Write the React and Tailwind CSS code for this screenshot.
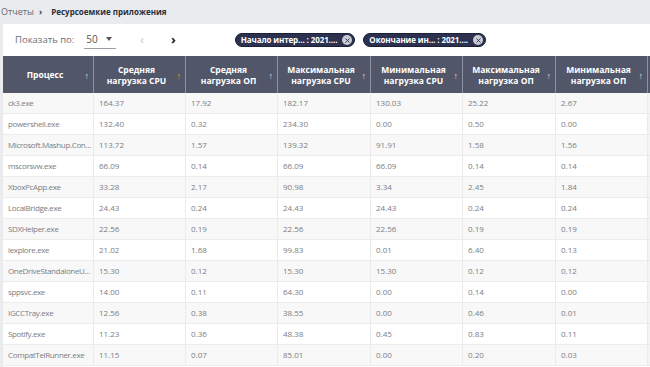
import { X } from 'lucide-react';

const columns = [
  { title: ['Процесс'], sorted: false },
  { title: ['Средняя', 'нагрузка CPU'], sorted: true },
  { title: ['Средняя', 'нагрузка ОП'], sorted: false },
  { title: ['Максимальная', 'нагрузка CPU'], sorted: false },
  { title: ['Минимальная', 'нагрузка CPU'], sorted: false },
  { title: ['Максимальная', 'нагрузка ОП'], sorted: false },
  { title: ['Минимальная', 'нагрузка ОП'], sorted: false },
];

const rows = [
  ['ck3.exe', '164.37', '17.92', '182.17', '130.03', '25.22', '2.67'],
  ['powershell.exe', '132.40', '0.32', '234.30', '0.00', '0.50', '0.00'],
  ['Microsoft.Mashup.Con...', '113.72', '1.57', '139.32', '91.91', '1.58', '1.56'],
  ['mscorsvw.exe', '66.09', '0.14', '66.09', '66.09', '0.14', '0.14'],
  ['XboxPcApp.exe', '33.28', '2.17', '90.98', '3.34', '2.45', '1.84'],
  ['LocalBridge.exe', '24.43', '0.24', '24.43', '24.43', '0.24', '0.24'],
  ['SDXHelper.exe', '22.56', '0.19', '22.56', '22.56', '0.19', '0.19'],
  ['iexplore.exe', '21.02', '1.68', '99.83', '0.01', '6.40', '0.13'],
  ['OneDriveStandaloneU...', '15.30', '0.12', '15.30', '15.30', '0.12', '0.12'],
  ['sppsvc.exe', '14.00', '0.11', '64.30', '0.00', '0.14', '0.00'],
  ['IGCCTray.exe', '12.56', '0.38', '38.55', '0.00', '0.46', '0.01'],
  ['Spotify.exe', '11.23', '0.36', '48.38', '0.45', '0.83', '0.11'],
  ['CompatTelRunner.exe', '11.15', '0.07', '85.01', '0.00', '0.20', '0.03'],
];

const gridCols = 'grid grid-cols-[91px_92px_92px_93px_92px_93px_92px_60px]';

const Chip = ({ label }) => (
  <div className="flex items-center h-[14px] rounded-full bg-[#2c3150] border border-[#1c2036] pl-[5px] pr-[2px] gap-[5px]">
    <span className="text-white font-bold text-[8px] tracking-[-0.1px] leading-none whitespace-nowrap">{label}</span>
    <span className="w-[10px] h-[10px] rounded-full bg-[#c9cbd3] flex items-center justify-center">
      <X className="w-[7px] h-[7px] text-[#2c3150]" strokeWidth={3} />
    </span>
  </div>
);

const App = () => {
  return (
    <div className="w-[650px] h-[367px] overflow-hidden bg-[#e9ebee] font-['Open_Sans','Noto_Sans',sans-serif]">
      <div className="h-[24px] flex items-center pl-[1px]">
        <span className="text-[#666a73] text-[9px]">Отчеты</span>
        <span className="text-[#444] font-bold text-[9px] ml-[5px] mr-[9px]">›</span>
        <span className="text-[#2b2f3a] font-bold text-[8px]">Ресурсоемкие приложения</span>
      </div>

      <div className="ml-[3px] bg-white h-[343px]">
        <div className="h-[32px] flex items-center pl-[12px]">
          <span className="text-[#6b6f78] text-[9.5px]">Показать по:</span>
          <div className="ml-[10px] w-[32px] h-[17px] border-b border-[#9a9ea6] flex items-center justify-between pl-[2px] pr-[4px]">
            <span className="text-[#555] text-[10px]">50</span>
            <span className="w-0 h-0 border-l-[3px] border-r-[3px] border-t-[4px] border-l-transparent border-r-transparent border-t-[#555] mb-[2px]" />
          </div>
          <span className="ml-[24px] text-[#c4c6cb] text-[12px]">‹</span>
          <span className="ml-[27px] text-[#222] text-[13px] font-bold">›</span>
          <div className="ml-[59px] flex gap-[8px]">
            <Chip label="Начало интер... : 2021...." />
            <Chip label="Окончание ин... : 2021...." />
          </div>
        </div>

        <div className={`${gridCols} h-[37px] bg-[#525669]`}>
          {columns.map((c, i) => (
            <div key={i} className="relative flex items-center justify-center border-r border-[#8d91a1] pr-[6px]">
              <div className="text-white font-bold text-[8.5px] leading-[11px] text-center">
                {c.title.map((t) => (
                  <div key={t}>{t}</div>
                ))}
              </div>
              <span className={`absolute right-[4px] top-[13px] text-[9px] font-bold ${c.sorted ? 'text-[#e0a23c]' : 'text-[#d9dbe2]'}`}>↑</span>
            </div>
          ))}
          <div className="bg-[#525669]" />
        </div>

        {rows.map((r, ri) => (
          <div key={ri} className={`${gridCols} h-[21px] border-b border-[#ececec] ${ri % 2 === 0 ? 'bg-[#f8f8f8]' : 'bg-white'}`}>
            {r.map((cell, ci) => (
              <div
                key={ci}
                className={`flex items-center pl-[5px] border-r border-[#ebebeb] text-[8px] text-[#7a7d84] whitespace-nowrap overflow-hidden ${ci === 0 ? 'tracking-[-0.35px]' : ''}`}
              >
                {cell}
              </div>
            ))}
            <div className="bg-[#f3f3f3]" />
          </div>
        ))}
      </div>
    </div>
  );
};

export default App;
